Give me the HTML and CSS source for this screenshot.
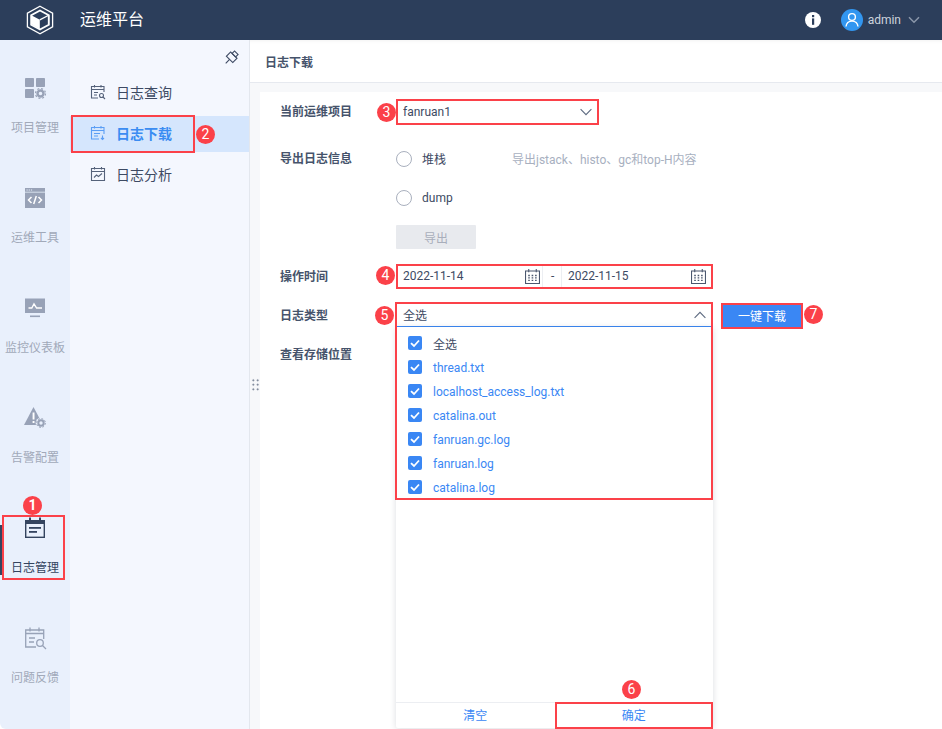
FILE: index.html
```html
<!DOCTYPE html>
<html lang="zh-CN">
<head>
<meta charset="utf-8">
<title>运维平台</title>
<link rel="stylesheet" href="styles.css">
</head>
<body>
<div class="app">
  <header class="topbar">
    <div class="logo">
      <svg width="28" height="30" viewBox="0 0 28 30">
        <path d="M14 1.200 26.600 8.100V21.900L14 28.800 1.400 21.900V8.100Z" fill="none" stroke="#fff" stroke-width="1.300"/>
        <path d="M14 5.500 22.800 10.200V19.800L14 24.500 5.200 19.800V10.200Z" fill="none" stroke="#fff" stroke-width="1.900"/>
        <path d="M5.800 10.500 13.800 14.800V24L5.800 19.600Z" fill="#fff"/>
        <path d="M13.800 14.800 22.200 10.500" stroke="#fff" stroke-width="1.300"/>
      </svg>
    </div>
    <div class="brand">运维平台</div>
    <div class="topbar-right">
      <svg class="info" width="16" height="16" viewBox="0 0 16 16">
        <circle cx="8" cy="8" r="8" fill="#fff"/>
        <rect x="7" y="3" width="2.200" height="2.200" fill="#2c3e5b"/>
        <rect x="7" y="6.400" width="2.200" height="6.400" fill="#2c3e5b"/>
      </svg>
      <div class="avatar">
        <svg width="22" height="22" viewBox="0 0 22 22">
          <circle cx="11" cy="8" r="3.400" fill="none" stroke="#fff" stroke-width="1.400"/>
          <path d="M5 17.500c.4-3.600 2.800-5.400 6-5.400s5.600 1.800 6 5.400" fill="none" stroke="#fff" stroke-width="1.400"/>
        </svg>
      </div>
      <span class="username">admin</span>
      <svg class="user-caret" width="12" height="8" viewBox="0 0 12 8"><path d="M1 1.200 6 6.200 11 1.200" fill="none" stroke="#8b97aa" stroke-width="1.500"/></svg>
    </div>
  </header>

  <div class="shell">
    <nav class="rail">
      <a class="rail-item">
        <svg width="24" height="24" viewBox="0 0 24 24" fill="#98a2b7">
          <rect x="2" y="2" width="9" height="9" rx=".8"/><rect x="13" y="2" width="9" height="9" rx=".8"/><rect x="2" y="13" width="9" height="9" rx=".8"/>
          <circle cx="17.500" cy="17.500" r="3" fill="none" stroke="#98a2b7" stroke-width="2.400"/>
          <circle cx="17.500" cy="17.500" r="5" fill="none" stroke="#98a2b7" stroke-width="1.200" stroke-dasharray="2 1.930"/>
        </svg>
        <span>项目管理</span>
      </a>
      <a class="rail-item">
        <svg width="24" height="24" viewBox="0 0 24 24">
          <path d="M2 2h20v20H2Z" fill="#98a2b7"/>
          <path d="M2 6.200h20" stroke="#e9f0fc" stroke-width=".8"/>
          <path d="M3.500 4h1.200M5.700 4h1.200M7.900 4h1.200" stroke="#e9f0fc" stroke-width="1"/>
          <path d="M8.500 11 5.500 14l3 3M15.500 11l3 3-3 3M13.300 10l-2.600 8" fill="none" stroke="#fff" stroke-width="1.500"/>
        </svg>
        <span>运维工具</span>
      </a>
      <a class="rail-item">
        <svg width="24" height="24" viewBox="0 0 24 24">
          <rect x="2" y="2.500" width="20" height="14.500" fill="#98a2b7"/>
          <rect x="7" y="19.500" width="10" height="1.600" fill="#98a2b7"/>
          <path d="M5.500 12h3.300L11 7.800 13.600 12H19" fill="none" stroke="#fff" stroke-width="1.400"/>
        </svg>
        <span>监控仪表板</span>
      </a>
      <a class="rail-item">
        <svg width="24" height="24" viewBox="0 0 24 24">
          <path d="M10.500 1 20 19H1Z" fill="#98a2b7"/>
          <rect x="9.600" y="6.500" width="1.900" height="7" fill="#fff"/>
          <rect x="9.600" y="15" width="1.900" height="2" fill="#fff"/>
          <circle cx="18" cy="17" r="5.400" fill="#e9f0fc"/>
          <circle cx="18" cy="17" r="2.700" fill="none" stroke="#98a2b7" stroke-width="2"/>
          <circle cx="18" cy="17" r="4.400" fill="none" stroke="#98a2b7" stroke-width="1" stroke-dasharray="1.800 1.650"/>
        </svg>
        <span>告警配置</span>
      </a>
      <a class="rail-item is-active">
        <svg width="24" height="24" viewBox="0 0 24 24">
          <path d="M2 4h20v18H2Z" fill="#34445f"/>
          <rect x="6" y="1.500" width="2" height="4" fill="#34445f"/><rect x="16" y="1.500" width="2" height="4" fill="#34445f"/>
          <rect x="3.400" y="8" width="17.200" height="12.600" fill="#e9f0fc"/>
          <rect x="6" y="11" width="12" height="1.800" fill="#34445f"/><rect x="6" y="15" width="8" height="1.800" fill="#34445f"/>
        </svg>
        <span>日志管理</span>
      </a>
      <a class="rail-item">
        <svg width="24" height="24" viewBox="0 0 24 24" fill="none" stroke="#98a2b7" stroke-width="1.300">
          <path d="M13 21H2.700V4h18v9"/><path d="M2.700 7.500h18M7 1.500v4M16 1.500v4M6 12h6M6 16h5"/>
          <circle cx="17" cy="17" r="3.300"/><path d="M19.500 19.500 23 23"/>
        </svg>
        <span>问题反馈</span>
      </a>
    </nav>

    <aside class="submenu">
      <div class="pin">
        <svg width="16" height="16" viewBox="0 0 16 16" fill="none" stroke="#3d4a63" stroke-width="1.100">
          <g transform="rotate(45 8 8)"><path d="M5.500 .5h5V4h-5Z"/><path d="M3.500 4h9v6h-9Z"/><path d="M8 10v5.500"/></g>
        </svg>
      </div>
      <a class="sub-item">
        <svg width="16" height="16" viewBox="0 0 16 16" fill="none" stroke="#55627a" stroke-width="1.100"><path d="M8 14H1.500V2.500h12.500V8"/><path d="M1.500 5.500h12.500M4.500 1v2.500M11 1v2.500M4 8.500h4M4 11h3"/><circle cx="11.500" cy="11.500" r="2"/><path d="M13 13l2 2"/></svg>
        <span>日志查询</span>
      </a>
      <a class="sub-item is-current">
        <svg width="16" height="16" viewBox="0 0 16 16" fill="none" stroke="#5b9ef5" stroke-width="1.100"><path d="M9 14H1.500V2.500h12.500V9"/><path d="M1.500 5.500h12.500M4.500 1v2.500M11 1v2.500M4 8.500h6M4 11h4M12.500 10.500v4M11 13l1.500 1.500L14 13"/></svg>
        <span>日志下载</span>
      </a>
      <a class="sub-item">
        <svg width="16" height="16" viewBox="0 0 16 16" fill="none" stroke="#55627a" stroke-width="1.100"><path d="M1.500 2.500h13v12h-13Z"/><path d="M1.500 5.500h13M4.500 1v2.500M11.500 1v2.500M4 11.500l2.500-2.500 2 1.500 3.500-3"/></svg>
        <span>日志分析</span>
      </a>
    </aside>

    <main class="main">
      <div class="page-title">日志下载</div>
      <div class="gutter">
        <form class="form">
          <div class="row row-first">
            <label class="label">当前运维项目</label>
            <div class="select select-project">
              <span>fanruan1</span>
              <svg class="chev" width="12" height="8" viewBox="0 0 12 8"><path d="M.6 1.200 6 6.600 11.400 1.200" fill="none" stroke="#5d6a80" stroke-width="1.100"/></svg>
            </div>
          </div>
          <div class="row row-export">
            <label class="label">导出日志信息</label>
            <div class="radio-line">
              <i class="radio"></i><span class="radio-text">堆栈</span>
              <span class="hint">导出jstack、histo、gc和top-H内容</span>
            </div>
          </div>
          <div class="row row-dump">
            <div class="label"></div>
            <div class="radio-line"><i class="radio"></i><span class="radio-text">dump</span></div>
          </div>
          <div class="row">
            <div class="label"></div>
            <button type="button" class="btn-disabled">导出</button>
          </div>
          <div class="row">
            <label class="label">操作时间</label>
            <div class="date-range">
              <div class="date-box date-start">
                <span>2022-11-14</span>
                <svg width="15" height="15" viewBox="0 0 14 14" fill="none" stroke="#4a576e"><path d="M.5 1.800h13v11.700H.5Z"/><path d="M3.500 0v3M10.500 0v3"/><path d="M3 6h1.500M6.200 6h1.500M9.400 6h1.500M3 8.300h1.500M6.200 8.300h1.500M9.400 8.300h1.500M3 10.600h1.500M6.200 10.600h1.500M9.400 10.600h1.500" stroke-width="1.300"/></svg>
              </div>
              <span class="dash">-</span>
              <div class="date-box date-end">
                <span>2022-11-15</span>
                <svg width="15" height="15" viewBox="0 0 14 14" fill="none" stroke="#4a576e"><path d="M.5 1.800h13v11.700H.5Z"/><path d="M3.500 0v3M10.500 0v3"/><path d="M3 6h1.500M6.200 6h1.500M9.400 6h1.500M3 8.300h1.500M6.200 8.300h1.500M9.400 8.300h1.500M3 10.600h1.500M6.200 10.600h1.500M9.400 10.600h1.500" stroke-width="1.300"/></svg>
              </div>
            </div>
          </div>
          <div class="row">
            <label class="label">日志类型</label>
            <div class="combo">
              <div class="select select-open">
                <span>全选</span>
                <svg class="chev" width="12" height="8" viewBox="0 0 12 8"><path d="M.6 6.800 6 1.400 11.400 6.800" fill="none" stroke="#5d6a80" stroke-width="1.100"/></svg>
              </div>
              <div class="dropdown">
                <ul class="options">
                  <li class="option option-all"><svg class="check" width="14" height="14" viewBox="0 0 14 14"><rect width="14" height="14" rx="2" fill="#3a87f4"/><path d="M3 7.200 6 10 11 4.500" fill="none" stroke="#fff" stroke-width="1.800"/></svg>全选</li>
                  <li class="option"><svg class="check" width="14" height="14" viewBox="0 0 14 14"><rect width="14" height="14" rx="2" fill="#3a87f4"/><path d="M3 7.200 6 10 11 4.500" fill="none" stroke="#fff" stroke-width="1.800"/></svg>thread.txt</li>
                  <li class="option"><svg class="check" width="14" height="14" viewBox="0 0 14 14"><rect width="14" height="14" rx="2" fill="#3a87f4"/><path d="M3 7.200 6 10 11 4.500" fill="none" stroke="#fff" stroke-width="1.800"/></svg>localhost_access_log.txt</li>
                  <li class="option"><svg class="check" width="14" height="14" viewBox="0 0 14 14"><rect width="14" height="14" rx="2" fill="#3a87f4"/><path d="M3 7.200 6 10 11 4.500" fill="none" stroke="#fff" stroke-width="1.800"/></svg>catalina.out</li>
                  <li class="option"><svg class="check" width="14" height="14" viewBox="0 0 14 14"><rect width="14" height="14" rx="2" fill="#3a87f4"/><path d="M3 7.200 6 10 11 4.500" fill="none" stroke="#fff" stroke-width="1.800"/></svg>fanruan.gc.log</li>
                  <li class="option"><svg class="check" width="14" height="14" viewBox="0 0 14 14"><rect width="14" height="14" rx="2" fill="#3a87f4"/><path d="M3 7.200 6 10 11 4.500" fill="none" stroke="#fff" stroke-width="1.800"/></svg>fanruan.log</li>
                  <li class="option"><svg class="check" width="14" height="14" viewBox="0 0 14 14"><rect width="14" height="14" rx="2" fill="#3a87f4"/><path d="M3 7.200 6 10 11 4.500" fill="none" stroke="#fff" stroke-width="1.800"/></svg>catalina.log</li>
                </ul>
                <div class="dropdown-foot"><span>清空</span><span>确定</span></div>
              </div>
            </div>
            <button type="button" class="btn-primary">一键下载</button>
          </div>
          <div class="row">
            <label class="label">查看存储位置</label>
          </div>
        </form>
      </div>
      <div class="drag-handle"></div>
    </main>
  </div>

  <div class="mark mark-1"></div>
  <div class="mark mark-2"></div>
  <div class="mark mark-3"></div>
  <div class="mark mark-4"></div>
  <div class="mark mark-5"></div>
  <div class="mark mark-6"></div>
  <div class="mark mark-7"></div>
  <div class="badge badge-1">1</div>
  <div class="badge badge-2">2</div>
  <div class="badge badge-3">3</div>
  <div class="badge badge-4">4</div>
  <div class="badge badge-5">5</div>
  <div class="badge badge-6">6</div>
  <div class="badge badge-7">7</div>
</div>
</body>
</html>
```
FILE: styles.css
```css
* { box-sizing: border-box; }
html, body { margin: 0; height: 100%; overflow: hidden; background: #c9ccd2; }
body { font-family: Roboto, "Noto Sans CJK SC", sans-serif; font-size: 12px; color: #3d4a63; }
ul { list-style: none; margin: 0; padding: 0; }

.app { position: relative; width: 942px; height: 729px; display: flex; flex-direction: column; overflow: hidden; }

.topbar { height: 40px; flex: none; display: flex; align-items: center; background: #2c3e5b; color: #fff; }
.logo { width: 80px; display: flex; justify-content: center; }
.brand { font-size: 16px; line-height: 40px; }
.topbar-right { margin-left: auto; display: flex; align-items: center; padding-right: 22px; }
.info { margin-right: 20px; }
.avatar { width: 22px; height: 22px; border-radius: 50%; background: #3296f0; }
.username { margin-left: 5px; color: #ccd3dd; }
.user-caret { margin-left: 7px; }

.shell { flex: 1; display: flex; min-height: 0; background: #fff; }

.rail { width: 70px; flex: none; padding-top: 3px; background: #e9f0fc; border-bottom-left-radius: 6px; }
.rail-item { height: 110px; display: flex; flex-direction: column; align-items: center; padding-top: 33px; color: #a1a9b9; position: relative; }
.rail-item span { margin-top: 20px; line-height: 16px; white-space: nowrap; }
.rail-item.is-active { color: #34445f; }
.rail-item.is-active::before { content: ""; position: absolute; left: 0; top: 42px; width: 2px; height: 50px; background: #34445f; }

.submenu { width: 180px; flex: none; background: #f4f7fe; border-right: 1px solid #e3e7ee; }
.pin { height: 35px; padding: 10px 10px 0 0; display: flex; justify-content: flex-end; }
.sub-item { height: 36px; margin-bottom: 5px; display: flex; align-items: center; padding: 0 0 2px 20px; font-size: 14px; color: #3d4a63; }
.sub-item span { margin-left: 10px; }
.sub-item.is-current { background: #d5e6fd; color: #3a8cf2; font-weight: 700; }

.main { flex: 1; min-width: 0; display: flex; flex-direction: column; position: relative; box-shadow: inset 0 4px 4px -4px rgba(0,0,0,.08); }
.page-title { height: 43px; flex: none; padding-left: 15px; line-height: 46px; font-weight: 700; color: #46536b; border-bottom: 1px solid #e6e9ef; }
.gutter { flex: 1; padding: 9px 0 0 10px; background: #f7f8fa; min-height: 0; }
.form { height: 100%; background: #fff; padding: 8px 0 0 20px; }
.drag-handle { position: absolute; left: 1px; top: 338px; width: 9px; height: 13px; background-image: radial-gradient(circle, #56637a 0.8px, transparent 1px); background-size: 4.500px 4.500px; }

.row { display: flex; align-items: center; min-height: 24px; margin-bottom: 15px; }
.row-export { margin-top: 22px; margin-bottom: 16px; }
.label { width: 116px; height: 24px; flex: none; font-weight: 700; color: #46536b; line-height: 26px; }
.row-first .label { line-height: 24px; }

.select { height: 24px; display: flex; align-items: center; justify-content: space-between; padding: 0 6px 0 7px; background: #fff; }
.select-project { width: 202px; }
.combo { position: relative; width: 316px; }
.select-open { border-bottom: 1px solid #3a87f4; }

.radio-line { display: flex; align-items: center; height: 24px; }
.radio { width: 16px; height: 16px; border: 1px solid #a9b0be; border-radius: 50%; background: #fff; }
.radio-text { margin-left: 10px; }
.hint { margin-left: 66px; color: #a8b0bf; }
.row-export .radio { margin-top: 2px; }

.btn-disabled { width: 80px; height: 24px; padding: 0; border: 0; border-radius: 1px; background: #e8eaee; color: #a8aebb; font: inherit; }
.btn-primary { width: 80px; height: 24px; margin-left: 10px; padding: 0; border: 0; background: #3a87f4; color: #fff; font: inherit; }

.date-range { width: 316px; height: 24px; display: flex; align-items: center; }
.date-box { height: 24px; display: flex; align-items: center; justify-content: space-between; border: 1px solid #eceef2; }
.date-start { width: 147px; padding: 0 2px 0 6px; }
.date-end { width: 151px; margin-left: auto; padding: 0 5px 0 6px; }
.dash { margin-left: 8px; }

.dropdown { position: absolute; left: 0; top: 24px; width: 317px; height: 401px; display: flex; flex-direction: column; background: #fff; box-shadow: 0 1px 6px rgba(60,70,90,.18); border-radius: 0 0 2px 2px; }
.options { flex: 1; padding-top: 4px; }
.option { height: 24px; display: flex; align-items: center; padding: 2px 0 0 12px; color: #3a87f4; white-space: nowrap; }
.check { margin: 0 11px 2px 0; flex: none; }
.option-all { color: #3d4a63; padding-top: 0; }
.option-all .check { margin-bottom: 0; }
.dropdown-foot { height: 26px; flex: none; display: flex; border-top: 1px solid #eceef2; color: #3a87f4; line-height: 26px; }
.dropdown-foot span { width: 50%; text-align: center; }

.mark { position: absolute; border: 2px solid #fb4149; pointer-events: none; }
.mark-1 { left: 2px; top: 515px; width: 63px; height: 65px; }
.mark-2 { left: 71px; top: 115px; width: 124px; height: 38px; }
.mark-3 { left: 396px; top: 99px; width: 203px; height: 26px; }
.mark-4 { left: 396px; top: 264px; width: 317px; height: 25px; }
.mark-5 { left: 395px; top: 302px; width: 318px; height: 198px; }
.mark-6 { left: 555px; top: 702px; width: 158px; height: 27px; }
.mark-7 { left: 721px; top: 303px; width: 82px; height: 26px; }

.badge { position: absolute; width: 19px; height: 19px; border-radius: 50%; background: #fb4149; color: #fff; font-size: 14px; line-height: 19px; text-align: center; }
.badge-1 { left: 23px; top: 496px; font-weight: 700; }
.badge-2 { left: 196px; top: 125px; }
.badge-3 { left: 377px; top: 103px; }
.badge-4 { left: 376px; top: 266px; }
.badge-5 { left: 375px; top: 306px; }
.badge-6 { left: 622px; top: 680px; }
.badge-7 { left: 804px; top: 305px; }
```
